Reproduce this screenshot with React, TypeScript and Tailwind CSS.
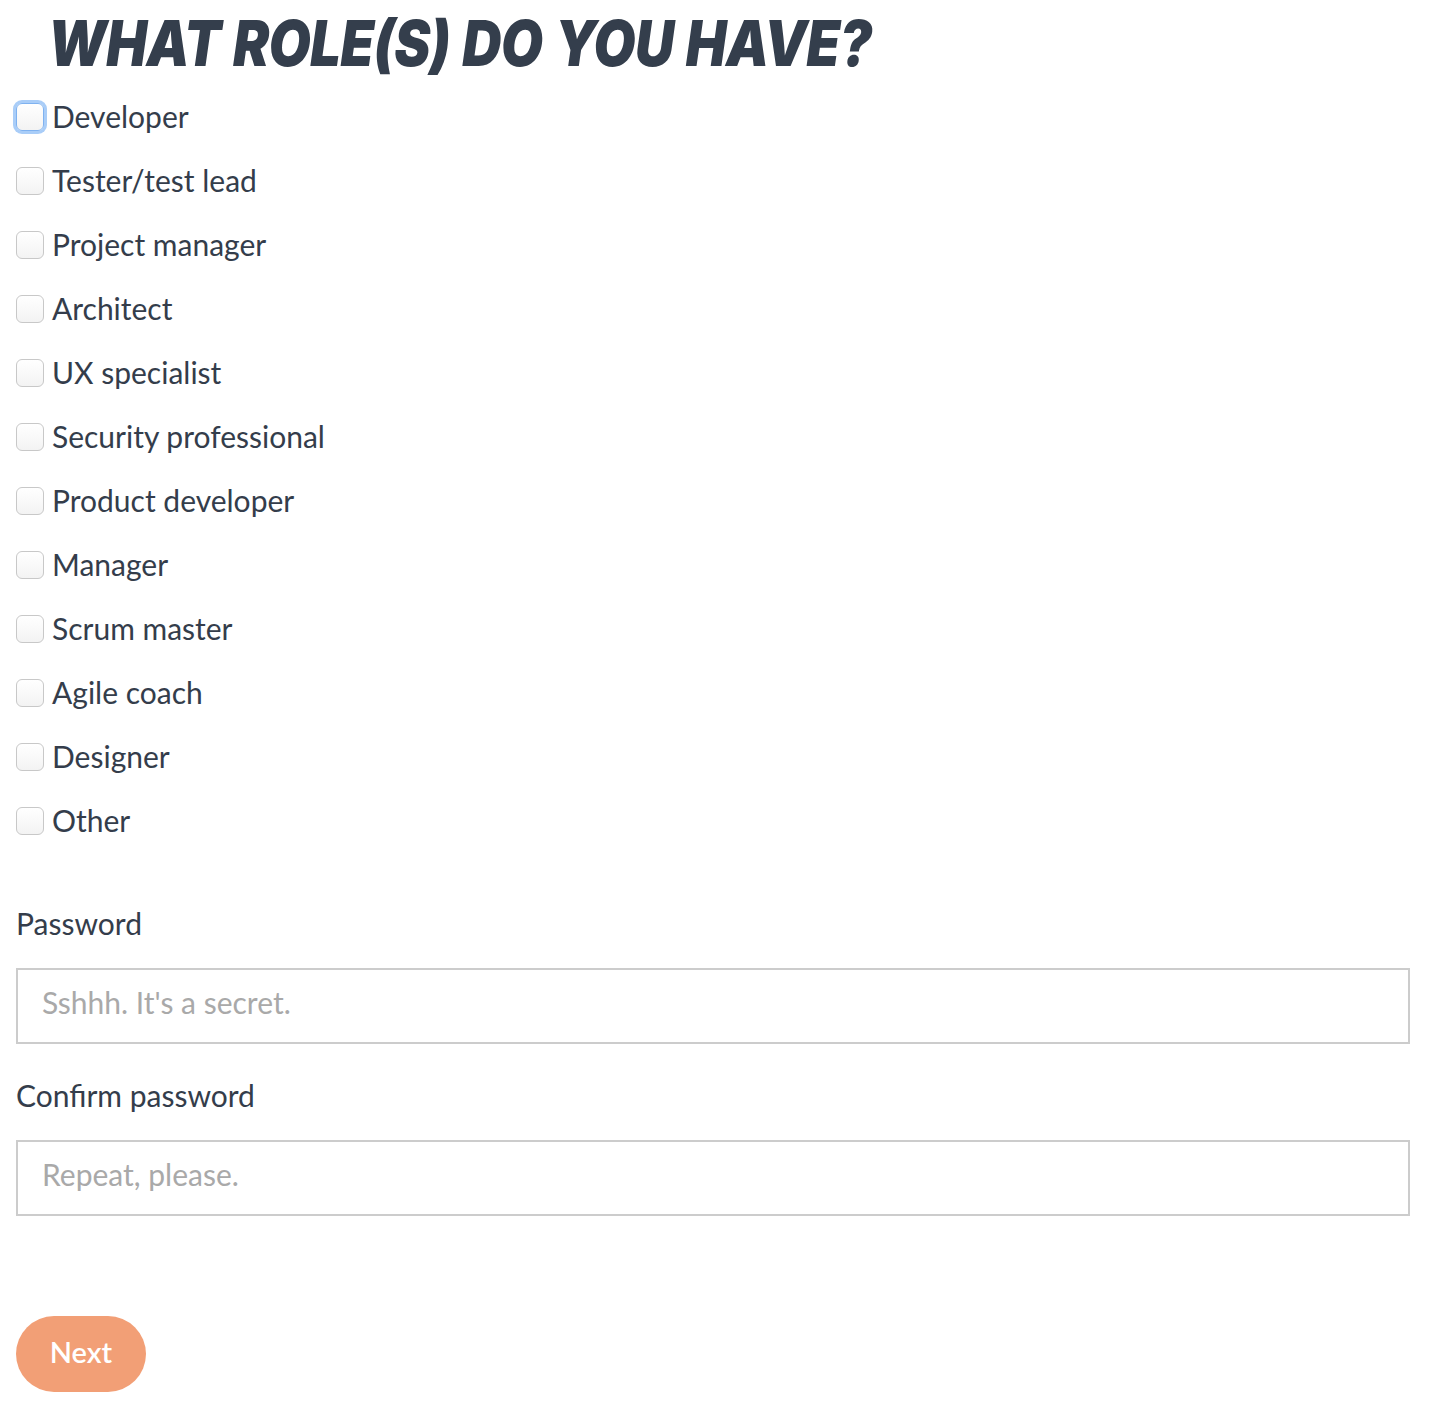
const roles = [
  'Developer',
  'Tester/test lead',
  'Project manager',
  'Architect',
  'UX specialist',
  'Security professional',
  'Product developer',
  'Manager',
  'Scrum master',
  'Agile coach',
  'Designer',
  'Other',
]

function RoleCheckbox({ label, focused }: { label: string; focused?: boolean }) {
  return (
    <label className="flex h-16 items-center">
      <span
        className={`h-[28px] w-[28px] shrink-0 rounded-[6px] border bg-gradient-to-b from-white to-[#f3f3f3] ${
          focused ? 'border-[#7fb2f0] ring-[3px] ring-[#a9cdf8]' : 'border-[#c8c8c8]'
        }`}
      />
      <span className="ml-2 -mt-[3px] text-[30px] leading-none text-[#343d4b]">{label}</span>
    </label>
  )
}

export default function App() {
  return (
    <div className="min-h-[1406px] bg-white font-['Lato',sans-serif] text-[#343d4b]">
      <div className="px-4">
        <h1 className="h-[85px] pl-[32px] pt-[12px]">
          <span className="inline-block origin-left scale-x-[0.86] whitespace-nowrap font-['Inter',sans-serif] text-[63px] font-black italic leading-none tracking-[-0.5px] text-[#343e4c] [word-spacing:2px]">
            WHAT ROLE(S) DO YOU HAVE?
          </span>
        </h1>
        <div className="flex flex-col">
          {roles.map((r, i) => (
            <RoleCheckbox key={r} label={r} focused={i === 0} />
          ))}
        </div>

        <div className="mt-[55px] text-[30px] leading-none">Password</div>
        <input
          type="password"
          placeholder="Sshhh. It's a secret."
          className="mt-[30px] block h-[76px] w-[1394px] border-2 border-[#cccccc] px-6 pb-2 text-[30px] outline-none placeholder:text-[#a9a9a9]"
        />

        <div className="mt-[36px] text-[30px] leading-none">Confirm password</div>
        <input
          type="password"
          placeholder="Repeat, please."
          className="mt-[30px] block h-[76px] w-[1394px] border-2 border-[#cccccc] px-6 pb-2 text-[30px] outline-none placeholder:text-[#a9a9a9]"
        />

        <button className="mt-[100px] h-[76px] w-[130px] rounded-full bg-[#f29f76] pb-1 text-[29px] font-semibold text-white">
          Next
        </button>
      </div>
    </div>
  )
}
